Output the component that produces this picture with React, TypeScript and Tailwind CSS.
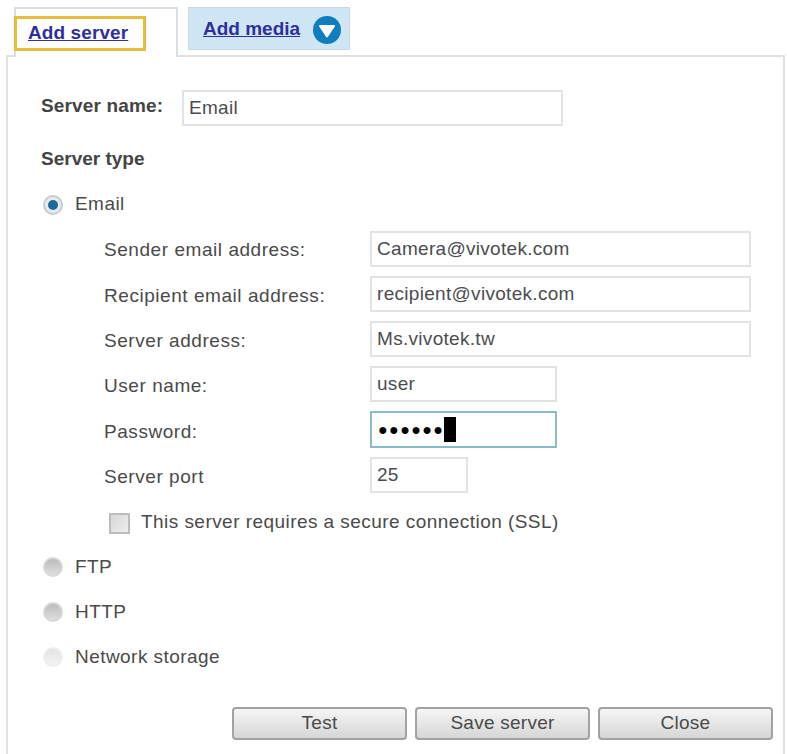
import React from "react";

const font = "font-['Liberation_Sans',Arial,sans-serif]";

function Field({ label, value, width }: { label: string; value: string; width: string }) {
  return (
    <div className="flex items-center h-[36px]">
      <label className="w-[266px] mt-[4px] text-[19px] tracking-[0.55px] text-[#4a4a4a]">{label}</label>
      <input
        readOnly
        value={value}
        className={`${width} h-[36px] border-2 border-[#e2e4e4] bg-white px-[5px] text-[19px] tracking-[0.3px] text-[#4c4c50] outline-none`}
      />
    </div>
  );
}

function Radio({ label, checked, faint }: { label: string; checked?: boolean; faint?: boolean }) {
  return (
    <div className="flex items-center h-[24px] pl-[35px]">
      <span
        className={`w-[20px] h-[20px] rounded-full flex items-center justify-center border-2 ${
          faint
            ? "border-[#eeeeee] bg-gradient-to-b from-[#e4e4e4] to-[#f2f2f2]"
            : checked
              ? "border-[#c8ccd0] bg-[#e4eaf0]"
              : "border-[#d8d8d8] bg-gradient-to-b from-[#bcbcbc] to-[#dedede]"
        }`}
      >
        {checked && <span className="w-[10px] h-[10px] rounded-full bg-[#1c6a9c]" />}
      </span>
      <span className="ml-[12px] text-[19px] tracking-[0.45px] text-[#4a4a4a]">{label}</span>
    </div>
  );
}

function Btn({ children }: { children: React.ReactNode }) {
  return (
    <button className="w-[175px] h-[33px] rounded-[4px] border-2 border-[#a2a2a2] bg-gradient-to-b from-[#f6f6f6] to-[#d6d6d6] text-[19px] tracking-[0.25px] text-[#4a4a4a]">
      {children}
    </button>
  );
}

export default function App() {
  return (
    <div className={`${font} w-[787px] h-[754px] overflow-hidden bg-white flex flex-col`}>
      <div className="flex items-start pl-[14px] pt-[7px] h-[55px] shrink-0">
        <div className="relative z-10 w-[164px] h-[50px] border-t-2 border-r-2 border-l-2 border-[#dcdfe0] bg-white pt-[7px]">
          <div className="-ml-[2px] w-[132px] h-[35px] border-[3px] border-[#e8bd3c] pl-[11px] flex items-center">
            <a className="text-[19px] font-bold tracking-[0.1px] underline text-[#2f2f9e]">Add server</a>
          </div>
        </div>
        <div className="ml-[10px] w-[162px] h-[43px] border border-[#c6dbe2] bg-[#cfe6f5] flex items-center pl-[14px] pt-[2px]">
          <a className="text-[19px] font-bold underline text-[#2f2f9e]">Add media</a>
          <svg className="ml-[13px]" width="28" height="28" viewBox="0 0 28 28">
            <circle cx="14" cy="14" r="14" fill="#0f7dbe" />
            <path d="M7 10 H21 L14 20.5 Z" fill="#ffffff" stroke="#ffffff" strokeWidth="2" strokeLinejoin="round" />
          </svg>
        </div>
      </div>

      <div className="ml-[6px] mr-[2px] flex-1 border-l-2 border-r-2 border-t-2 border-[#e0e2e2] bg-white flex flex-col">
        <div className="flex items-start pl-[33px] pt-[33px]">
          <label className="w-[141px] mt-[2px] text-[19px] font-bold tracking-[0.15px] text-[#444444]">Server name:</label>
          <input
            readOnly
            value="Email"
            className="w-[381px] h-[36px] border-2 border-[#e2e4e4] px-[5px] text-[19px] tracking-[0.3px] text-[#4c4c50] outline-none"
          />
        </div>

        <div className="pl-[33px] mt-[19px] text-[19px] font-bold text-[#444444]">Server type</div>

        <div className="mt-[19px]">
          <Radio label="Email" checked />
        </div>

        <div className="ml-[96px] mt-[14px] flex flex-col gap-[9.33px]">
          <Field label="Sender email address:" value="Camera@vivotek.com" width="w-[381px]" />
          <Field label="Recipient email address:" value="recipient@vivotek.com" width="w-[381px]" />
          <Field label="Server address:" value="Ms.vivotek.tw" width="w-[381px]" />
          <Field label="User name:" value="user" width="w-[187px]" />
          <div className="flex items-center h-[36px]">
            <label className="w-[266px] mt-[4px] text-[19px] tracking-[0.55px] text-[#4a4a4a]">Password:</label>
            <div className="w-[187px] h-[37px] border-2 border-[#88bccb] flex items-center pl-[6px]">
              <span className="text-[16px] tracking-[1.4px] text-black">●●●●●●</span>
              <span className="w-[12px] h-[25px] bg-black" />
            </div>
          </div>
          <Field label="Server port" value="25" width="w-[98px]" />
        </div>

        <div className="flex items-center pl-[101px] mt-[18px] h-[24px]">
          <span className="w-[21px] h-[21px] border-2 border-[#bcbcbc] bg-gradient-to-br from-[#d8d8d8] to-[#eeeeee] shrink-0" />
          <span className="ml-[11px] -mt-[1px] text-[19px] tracking-[0.45px] text-[#4a4a4a]">
            This server requires a secure connection (SSL)
          </span>
        </div>

        <div className="mt-[20px] flex flex-col gap-[21px]">
          <Radio label="FTP" />
          <Radio label="HTTP" />
          <Radio label="Network storage" faint />
        </div>

        <div className="flex gap-[8px] pl-[224px] mt-[38px]">
          <Btn>Test</Btn>
          <Btn>Save server</Btn>
          <Btn>Close</Btn>
        </div>
      </div>
    </div>
  );
}
